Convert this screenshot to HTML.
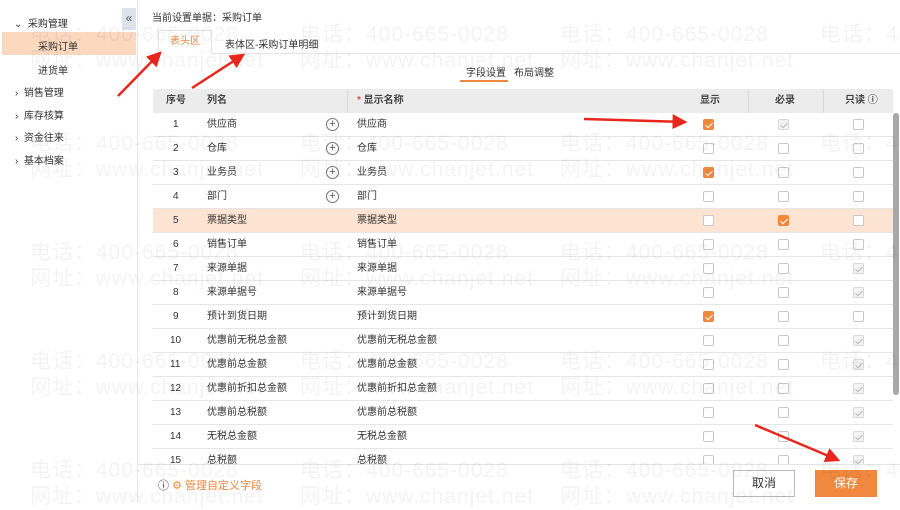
<!DOCTYPE html>
<html><head><meta charset="utf-8"><style>
*{margin:0;padding:0;box-sizing:border-box}
body{width:900px;height:502px;overflow:hidden;background:#fff;font-family:"Liberation Sans","Noto Sans CJK SC",sans-serif;font-size:10px;color:#333;position:relative}
.a{position:absolute;white-space:nowrap}
.wm{position:absolute;font-size:21px;color:#000;opacity:.045;white-space:nowrap;letter-spacing:1px}
.row{position:absolute;left:153px;width:740px;height:24px;border-bottom:1px solid #e6e6e6}
.row span{position:absolute;top:0;line-height:23px}
.cb{position:absolute;width:11px;height:11px;border:1px solid #c8c8c8;border-radius:2px;background:#fff;top:6px}
.cb.on{background:#f0883e;border-color:#f0883e}
.cb.dis{background:#f2f2f2;border-color:#d8d8d8}
.cb.on::after,.cb.dis::after{content:"";position:absolute;left:3px;top:1px;width:3px;height:6px;border:solid #fff;border-width:0 1.5px 1.5px 0;transform:rotate(45deg)}
.cb.dis::after{border-color:#bbb}
.plus{position:absolute;left:173px;top:5px;width:13px;height:13px;border:1px solid #777;border-radius:50%;font-size:11px;line-height:10px;text-align:center;color:#555}
.h{position:absolute;top:89px;line-height:24px;font-weight:bold;color:#444}
</style></head><body>
<!-- sidebar -->
<div class="a" style="left:137px;top:0;width:1px;height:502px;background:#e8e8e8"></div>
<div class="a" style="left:122px;top:8px;width:14px;height:22px;background:#dde3ea;color:#556;font-size:12px;line-height:20px;text-align:center">«</div>
<div class="a" style="left:14px;top:15px">⌄&nbsp; 采购管理</div>
<div class="a" style="left:2px;top:32px;width:134px;height:23px;background:#fcd8bf"></div>
<div class="a" style="left:38px;top:38px">采购订单</div>
<div class="a" style="left:38px;top:62px">进货单</div>
<div class="a" style="left:15px;top:84px">›&nbsp; 销售管理</div>
<div class="a" style="left:15px;top:107px">›&nbsp; 库存核算</div>
<div class="a" style="left:15px;top:129px">›&nbsp; 资金往来</div>
<div class="a" style="left:15px;top:152px">›&nbsp; 基本档案</div>
<!-- top -->
<div class="a" style="left:152px;top:9px">当前设置单据：采购订单</div>
<div class="a" style="left:158px;top:53px;width:742px;height:1px;background:#e4e4e4"></div>
<div class="a" style="left:158px;top:30px;width:54px;height:24px;border:1px solid #e4e4e4;border-bottom:1px solid #fff;background:#fff;color:#f0883e;text-align:center;line-height:22px">表头区</div>
<div class="a" style="left:225px;top:36px">表体区-采购订单明细</div>
<div class="a" style="left:466px;top:64px">字段设置</div>
<div class="a" style="left:460px;top:80px;width:48px;height:2px;background:#f0883e"></div>
<div class="a" style="left:514px;top:64px">布局调整</div>
<!-- header -->
<div class="a" style="left:153px;top:89px;width:740px;height:24px;background:#ececec"></div>
<div class="h" style="left:166px">序号</div>
<div class="h" style="left:207px">列名</div>
<div class="a" style="left:347px;top:89px;width:1px;height:24px;background:#d8d8d8"></div>
<div class="h" style="left:357px"><span style="color:#f44">*</span> 显示名称</div>
<div class="h" style="left:700px">显示</div>
<div class="a" style="left:748px;top:89px;width:1px;height:24px;background:#d8d8d8"></div>
<div class="h" style="left:775px">必录</div>
<div class="a" style="left:823px;top:89px;width:1px;height:24px;background:#d8d8d8"></div>
<div class="h" style="left:845px">只读 ⓘ</div>
<!-- rows -->
<div class="row" style="top:113px"><span style="left:20px">1</span><span style="left:54px">供应商</span><div class="plus">+</div><span style="left:204px">供应商</span><div class="cb on" style="left:550px"></div><div class="cb dis" style="left:625px"></div><div class="cb" style="left:700px"></div></div>
<div class="row" style="top:137px"><span style="left:20px">2</span><span style="left:54px">仓库</span><div class="plus">+</div><span style="left:204px">仓库</span><div class="cb" style="left:550px"></div><div class="cb" style="left:625px"></div><div class="cb" style="left:700px"></div></div>
<div class="row" style="top:161px"><span style="left:20px">3</span><span style="left:54px">业务员</span><div class="plus">+</div><span style="left:204px">业务员</span><div class="cb on" style="left:550px"></div><div class="cb" style="left:625px"></div><div class="cb" style="left:700px"></div></div>
<div class="row" style="top:185px"><span style="left:20px">4</span><span style="left:54px">部门</span><div class="plus">+</div><span style="left:204px">部门</span><div class="cb" style="left:550px"></div><div class="cb" style="left:625px"></div><div class="cb" style="left:700px"></div></div>
<div class="row" style="top:209px;background:#fde3d1"><span style="left:20px">5</span><span style="left:54px">票据类型</span><span style="left:204px">票据类型</span><div class="cb" style="left:550px"></div><div class="cb on" style="left:625px"></div><div class="cb" style="left:700px"></div></div>
<div class="row" style="top:233px"><span style="left:20px">6</span><span style="left:54px">销售订单</span><span style="left:204px">销售订单</span><div class="cb" style="left:550px"></div><div class="cb" style="left:625px"></div><div class="cb" style="left:700px"></div></div>
<div class="row" style="top:257px"><span style="left:20px">7</span><span style="left:54px">来源单据</span><span style="left:204px">来源单据</span><div class="cb" style="left:550px"></div><div class="cb" style="left:625px"></div><div class="cb dis" style="left:700px"></div></div>
<div class="row" style="top:281px"><span style="left:20px">8</span><span style="left:54px">来源单据号</span><span style="left:204px">来源单据号</span><div class="cb" style="left:550px"></div><div class="cb" style="left:625px"></div><div class="cb dis" style="left:700px"></div></div>
<div class="row" style="top:305px"><span style="left:20px">9</span><span style="left:54px">预计到货日期</span><span style="left:204px">预计到货日期</span><div class="cb on" style="left:550px"></div><div class="cb" style="left:625px"></div><div class="cb" style="left:700px"></div></div>
<div class="row" style="top:329px"><span style="left:17px">10</span><span style="left:54px">优惠前无税总金额</span><span style="left:204px">优惠前无税总金额</span><div class="cb" style="left:550px"></div><div class="cb" style="left:625px"></div><div class="cb dis" style="left:700px"></div></div>
<div class="row" style="top:353px"><span style="left:17px">11</span><span style="left:54px">优惠前总金额</span><span style="left:204px">优惠前总金额</span><div class="cb" style="left:550px"></div><div class="cb" style="left:625px"></div><div class="cb dis" style="left:700px"></div></div>
<div class="row" style="top:377px"><span style="left:17px">12</span><span style="left:54px">优惠前折扣总金额</span><span style="left:204px">优惠前折扣总金额</span><div class="cb" style="left:550px"></div><div class="cb" style="left:625px"></div><div class="cb dis" style="left:700px"></div></div>
<div class="row" style="top:401px"><span style="left:17px">13</span><span style="left:54px">优惠前总税额</span><span style="left:204px">优惠前总税额</span><div class="cb" style="left:550px"></div><div class="cb" style="left:625px"></div><div class="cb dis" style="left:700px"></div></div>
<div class="row" style="top:425px"><span style="left:17px">14</span><span style="left:54px">无税总金额</span><span style="left:204px">无税总金额</span><div class="cb" style="left:550px"></div><div class="cb" style="left:625px"></div><div class="cb dis" style="left:700px"></div></div>
<div class="a" style="left:153px;top:449px;width:740px;height:15px;overflow:hidden"><div class="row" style="top:0;left:0"><span style="left:17px">15</span><span style="left:54px">总税额</span><span style="left:204px">总税额</span><div class="cb" style="left:550px"></div><div class="cb" style="left:625px"></div><div class="cb dis" style="left:700px"></div></div></div>
<div class="a" style="left:138px;top:464px;width:762px;height:1px;background:#e4e4e4"></div>
<!-- scrollbar -->
<div class="a" style="left:893px;top:113px;width:6px;height:282px;background:#a8a8a8;border-radius:3px"></div>
<!-- footer -->
<div class="a" style="left:158px;top:477px;font-size:11px">ⓘ <span style="color:#f0883e">⚙ 管理自定义字段</span></div>
<div class="a" style="left:733px;top:470px;width:62px;height:27px;border:1px solid #bbb;text-align:center;line-height:25px;font-size:12px">取消</div>
<div class="a" style="left:815px;top:470px;width:62px;height:27px;background:#f0883e;color:#fff;text-align:center;line-height:27px;font-size:12px">保存</div>
<!-- watermarks -->
<div class="wm" style="left:30px;top:18px">电话：400-665-0028</div><div class="wm" style="left:300px;top:18px">电话：400-665-0028</div><div class="wm" style="left:560px;top:18px">电话：400-665-0028</div><div class="wm" style="left:820px;top:18px">电话：400</div>
<div class="wm" style="left:30px;top:44px">网址：www.chanjet.net</div><div class="wm" style="left:300px;top:44px">网址：www.chanjet.net</div><div class="wm" style="left:560px;top:44px">网址：www.chanjet.net</div>
<div class="wm" style="left:30px;top:127px">电话：400-665-0028</div><div class="wm" style="left:300px;top:127px">电话：400-665-0028</div><div class="wm" style="left:560px;top:127px">电话：400-665-0028</div><div class="wm" style="left:820px;top:127px">电话：400</div>
<div class="wm" style="left:30px;top:153px">网址：www.chanjet.net</div><div class="wm" style="left:300px;top:153px">网址：www.chanjet.net</div><div class="wm" style="left:560px;top:153px">网址：www.chanjet.net</div>
<div class="wm" style="left:30px;top:236px">电话：400-665-0028</div><div class="wm" style="left:300px;top:236px">电话：400-665-0028</div><div class="wm" style="left:560px;top:236px">电话：400-665-0028</div><div class="wm" style="left:820px;top:236px">电话：400</div>
<div class="wm" style="left:30px;top:262px">网址：www.chanjet.net</div><div class="wm" style="left:300px;top:262px">网址：www.chanjet.net</div><div class="wm" style="left:560px;top:262px">网址：www.chanjet.net</div>
<div class="wm" style="left:30px;top:345px">电话：400-665-0028</div><div class="wm" style="left:300px;top:345px">电话：400-665-0028</div><div class="wm" style="left:560px;top:345px">电话：400-665-0028</div><div class="wm" style="left:820px;top:345px">电话：400</div>
<div class="wm" style="left:30px;top:371px">网址：www.chanjet.net</div><div class="wm" style="left:300px;top:371px">网址：www.chanjet.net</div><div class="wm" style="left:560px;top:371px">网址：www.chanjet.net</div>
<div class="wm" style="left:30px;top:454px">电话：400-665-0028</div><div class="wm" style="left:300px;top:454px">电话：400-665-0028</div><div class="wm" style="left:560px;top:454px">电话：400-665-0028</div><div class="wm" style="left:820px;top:454px">电话：400</div>
<div class="wm" style="left:30px;top:480px">网址：www.chanjet.net</div><div class="wm" style="left:300px;top:480px">网址：www.chanjet.net</div><div class="wm" style="left:560px;top:480px">网址：www.chanjet.net</div>
<!-- arrows -->
<svg class="a" style="left:0;top:0" width="900" height="502">
<defs><marker id="m" markerWidth="6" markerHeight="6" refX="5" refY="3" orient="auto"><path d="M0,0 L6,3 L0,6 z" fill="#e8261c"/></marker></defs>
<g stroke="#e8261c" stroke-width="2.5" fill="none" marker-end="url(#m)">
<line x1="118" y1="96" x2="160" y2="53"/>
<line x1="192" y1="88" x2="243" y2="55"/>
<line x1="584" y1="119" x2="685" y2="122"/>
<line x1="755" y1="425" x2="838" y2="460"/>
</g></svg>
</body></html>
